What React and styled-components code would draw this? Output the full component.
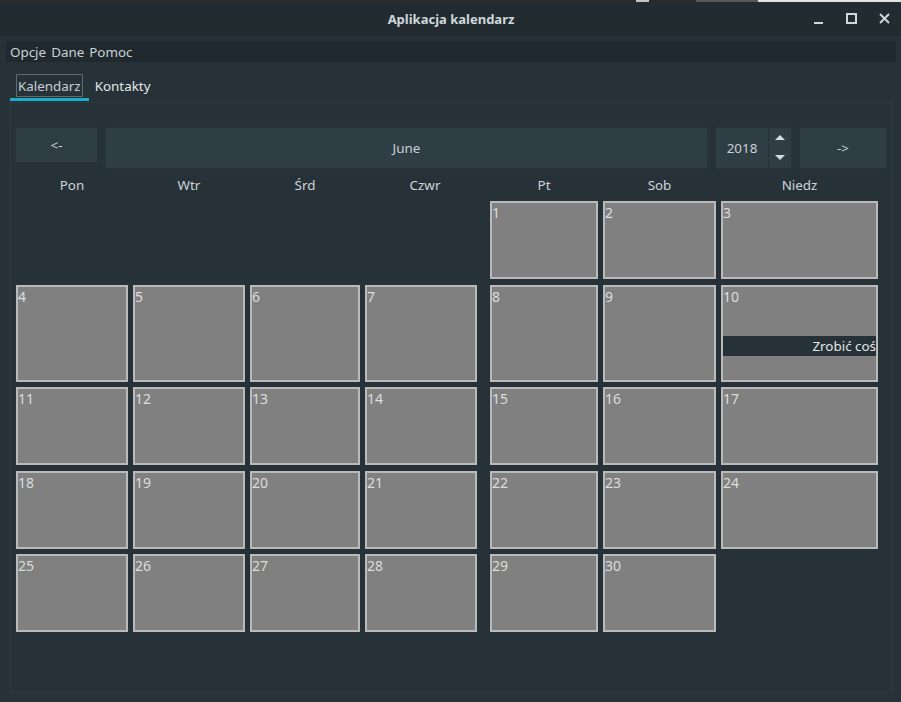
import React from "react";
import styled, { createGlobalStyle } from "styled-components";

const GlobalStyle = createGlobalStyle`
  html, body {
    margin: 0;
    padding: 0;
    background: #263238;
  }
  * {
    box-sizing: border-box;
  }
`;

const COL_TRACKS = "112px 112px 110px 120px 108px 113px 157px";
const COL_WIDTHS = [112, 112, 110, 112, 108, 113, 157];
const DAYS = ["Pon", "Wtr", "Śrd", "Czwr", "Pt", "Sob", "Niedz"];
const EVENTS = { 10: "Zrobić coś" };

// June 2018 starts on a Friday (col index 4)
const buildCells = () => {
  const cells = [];
  for (let d = 1; d <= 30; d++) {
    const idx = d - 1 + 4;
    cells.push({ day: d, row: Math.floor(idx / 7) + 1, col: (idx % 7) + 1 });
  }
  return cells;
};

const Window = styled.div`
  width: 901px;
  height: 702px;
  display: flex;
  flex-direction: column;
  background: #263238;
  font-family: "Noto Sans", "Open Sans", sans-serif;
  font-size: 13.4px;
  overflow: hidden;
`;

const TopStrip = styled.div`
  height: 2px;
  flex-shrink: 0;
  background: linear-gradient(
    to right,
    #2a2a2a 0px,
    #2a2a2a 636px,
    #c4c4c4 636px,
    #c4c4c4 649px,
    #2a2a2a 649px,
    #2a2a2a 696px,
    #585858 696px,
    #585858 758px,
    #e2e2e2 758px
  );
`;

const TitleBar = styled.div`
  height: 34px;
  flex-shrink: 0;
  background: #222b30;
  display: flex;
  align-items: center;
  justify-content: center;
  position: relative;
`;

const Title = styled.div`
  color: #cfd8dc;
  font-weight: bold;
  font-size: 13px;
  margin-left: 1px;
`;

const Controls = styled.div`
  position: absolute;
  right: 11px;
  top: 11px;
  display: flex;
  gap: 22px;
`;

const MenuBar = styled.div`
  margin: 5px 5px 0 6px;
  height: 21px;
  background: #20292e;
  display: flex;
  align-items: center;
  padding-left: 4px;
  gap: 5px;
  color: #c9d1d5;
`;

const TabBar = styled.div`
  display: flex;
  align-items: flex-end;
  margin-top: 10px;
  padding-left: 10px;
  height: 29px;
`;

const Tab = styled.div`
  height: 100%;
  padding: 2px 6px 0;
  border-bottom: 3px solid ${(p) => (p.$active ? "#19b0cc" : "transparent")};
  display: flex;
  align-items: flex-start;
`;

const TabLabel = styled.div`
  height: 23px;
  padding: 0 ${(p) => (p.$active ? "1px" : "0")};
  display: flex;
  align-items: center;
  color: ${(p) => (p.$active ? "#c7cfd3" : "#e0e6e9")};
  border: ${(p) => (p.$active ? "1px solid #5d6b72" : "none")};
  border-radius: 1px;
`;

const Panel = styled.div`
  margin: 1px 8px 9px 10px;
  flex: 1;
  border: 1px solid #2f3b41;
  padding: 24px 4px 0 4px;
  display: flex;
  flex-direction: column;
`;

const NavRow = styled.div`
  display: flex;
  align-items: flex-start;
  gap: 7px;
`;

const NavButton = styled.div`
  width: ${(p) => p.$w}px;
  height: ${(p) => p.$h}px;
  background: #2f3d45;
  border: 1px solid #2a363d;
  border-radius: 2px;
  display: flex;
  align-items: center;
  justify-content: center;
  color: #c9d1d5;
`;

const SpinBox = styled.div`
  width: 77px;
  height: 42px;
  display: flex;
  background: #2f3d45;
  border: 1px solid #2a363d;
  border-radius: 2px;
`;

const SpinValue = styled.div`
  flex: 1;
  display: flex;
  align-items: center;
  justify-content: center;
  color: #c9d1d5;
  border-right: 1px solid #263238;
`;

const SpinArrows = styled.div`
  width: 22px;
  display: flex;
  flex-direction: column;
  align-items: center;
  justify-content: space-between;
  padding: 7px 0 8px;
`;

const Arrow = styled.div`
  width: 0;
  height: 0;
  border-left: 5px solid transparent;
  border-right: 5px solid transparent;
  ${(p) =>
    p.$up
      ? "border-bottom: 5px solid #d5dde0;"
      : "border-top: 5px solid #d5dde0;"}
`;

const HeaderRow = styled.div`
  display: grid;
  grid-template-columns: ${COL_TRACKS};
  column-gap: 5px;
  margin: 7px 0 0 1px;
  height: 18px;
`;

const DayName = styled.div`
  text-align: center;
  color: #cdd4d8;
  line-height: 18px;
`;

const Grid = styled.div`
  display: grid;
  grid-template-columns: ${COL_TRACKS};
  grid-template-rows: 78px 97px 78px 78px 78px;
  column-gap: 5px;
  row-gap: 5.5px;
  margin: 7px 0 0 1px;
`;

const Cell = styled.div`
  width: ${(p) => p.$w}px;
  background: #808080;
  border: 2px solid #bababa;
  display: flex;
  flex-direction: column;
`;

const DayNum = styled.div`
  color: #dcdcdc;
  font-size: 14px;
  line-height: 18px;
  margin-top: 1px;
`;

const EventBar = styled.div`
  margin-top: 30px;
  height: 20px;
  background: #263238;
  color: #e3e6e8;
  line-height: 20px;
  text-align: right;
  white-space: nowrap;
`;

const CtrlIcon = ({ children }) => (
  <svg width="11" height="11" viewBox="0 0 11 11" fill="none" stroke="#cfd8dc" strokeWidth="2">
    {children}
  </svg>
);

export default function App() {
  const cells = buildCells();
  return (
    <>
      <GlobalStyle />
      <Window>
        <TopStrip />
        <TitleBar>
          <Title>Aplikacja kalendarz</Title>
          <Controls>
            <CtrlIcon>
              <line x1="1" y1="10" x2="10" y2="10" />
            </CtrlIcon>
            <CtrlIcon>
              <rect x="1" y="1" width="9" height="9" />
            </CtrlIcon>
            <CtrlIcon>
              <line x1="1" y1="1" x2="10" y2="10" />
              <line x1="10" y1="1" x2="1" y2="10" />
            </CtrlIcon>
          </Controls>
        </TitleBar>
        <MenuBar>
          <span>Opcje</span>
          <span>Dane</span>
          <span>Pomoc</span>
        </MenuBar>
        <TabBar>
          <Tab $active>
            <TabLabel $active>Kalendarz</TabLabel>
          </Tab>
          <Tab>
            <TabLabel>Kontakty</TabLabel>
          </Tab>
        </TabBar>
        <Panel>
          <NavRow>
            <NavButton $w={83} $h={36}>&lt;-</NavButton>
            <NavButton $w={603} $h={42}>June</NavButton>
            <SpinBox>
              <SpinValue>2018</SpinValue>
              <SpinArrows>
                <Arrow $up />
                <Arrow />
              </SpinArrows>
            </SpinBox>
            <NavButton $w={88} $h={42}>-&gt;</NavButton>
          </NavRow>
          <HeaderRow>
            {DAYS.map((d) => (
              <DayName key={d}>{d}</DayName>
            ))}
          </HeaderRow>
          <Grid>
            {cells.map((c) => (
              <Cell
                key={c.day}
                $w={COL_WIDTHS[c.col - 1]}
                style={{ gridRow: c.row, gridColumn: c.col }}
              >
                <DayNum>{c.day}</DayNum>
                {EVENTS[c.day] && <EventBar>{EVENTS[c.day]}</EventBar>}
              </Cell>
            ))}
          </Grid>
        </Panel>
      </Window>
    </>
  );
}
